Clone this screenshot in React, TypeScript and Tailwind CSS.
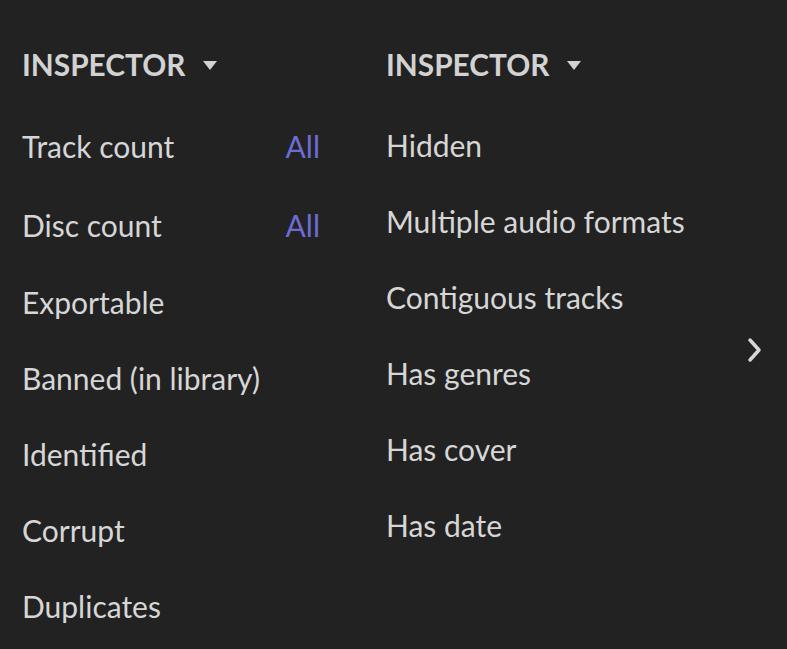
import React from 'react';

const leftRows: { label: string; value?: string }[] = [
    { label: 'Track count', value: 'All' },
    { label: 'Disc count', value: 'All' },
    { label: 'Exportable' },
    { label: 'Banned (in library)' },
    { label: 'Identified' },
    { label: 'Corrupt' },
    { label: 'Duplicates' },
];

const rightRows = [
    'Hidden',
    'Multiple audio formats',
    'Contiguous tracks',
    'Has genres',
    'Has cover',
    'Has date',
];

function Header() {
    return (
        <div className="flex items-center h-[40px] gap-[18px]">
            <span className="text-[29.8px] font-bold text-[#d2d2d2]">INSPECTOR</span>
            <svg width="14" height="9" viewBox="0 0 14 9" className="mt-[1px]">
                <polygon points="0,0 14,0 7,9" fill="#d2d2d2" />
            </svg>
        </div>
    );
}

export default function App() {
    return (
        <div
            className="relative w-[787px] h-[649px] bg-[#222222] text-[#d6d6d6] overflow-hidden"
            style={{ fontFamily: 'Lato, "Noto Sans", sans-serif' }}
        >
            <div className="flex pt-[45px] pl-[22px] gap-[66px]">
                <div className="flex flex-col w-[298px]">
                    <Header />
                    <div className="flex flex-col mt-[21px]">
                        {leftRows.map((row, i) => (
                            <div
                                key={row.label}
                                className={`flex items-center justify-between ${i === 0 ? 'h-[80px]' : i === 1 ? 'h-[78px]' : 'h-[76px]'}`}
                            >
                                <span className="text-[30px]">{row.label}</span>
                                {row.value && <span className="text-[30px] text-[#6c6cd4]">{row.value}</span>}
                            </div>
                        ))}
                    </div>
                </div>
                <div className="flex flex-col">
                    <Header />
                    <div className="flex flex-col mt-[22px]">
                        {rightRows.map((label) => (
                            <div key={label} className="flex items-center h-[76px]">
                                <span className="text-[30px]">{label}</span>
                            </div>
                        ))}
                    </div>
                </div>
            </div>
            <button className="absolute left-[740px] top-[332px] w-[30px] h-[36px] flex items-center justify-center">
                <svg width="16" height="26" viewBox="0 0 16 26" fill="none">
                    <path d="M3 3 L12 13 L3 23" stroke="#d6d6d6" strokeWidth="3.5" strokeLinecap="round" strokeLinejoin="round" />
                </svg>
            </button>
        </div>
    );
}
